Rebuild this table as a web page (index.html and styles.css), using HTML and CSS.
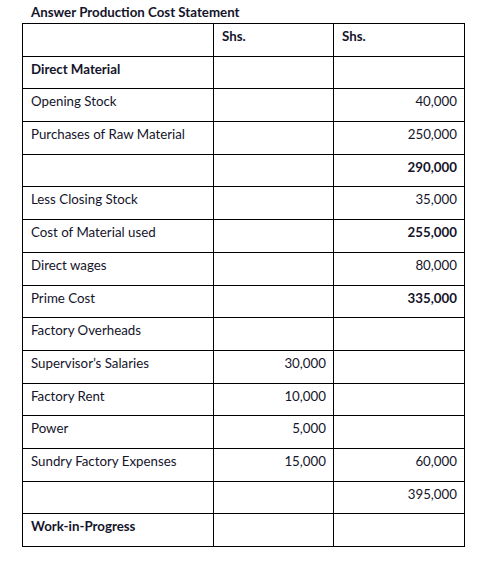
FILE: index.html
```html
<!DOCTYPE html>
<html>
<head>
<meta charset="utf-8">
<link rel="stylesheet" href="styles.css">
</head>
<body>
<div class="page">
  <div class="title">Answer Production Cost Statement</div>
  <table class="sheet">
    <colgroup><col class="c1"><col class="c2"><col class="c3"></colgroup>
    <tr><td></td><td class="hd">Shs.</td><td class="hd">Shs.</td></tr>
    <tr><td class="b">Direct Material</td><td></td><td></td></tr>
    <tr><td>Opening Stock</td><td></td><td class="n">40,000</td></tr>
    <tr><td>Purchases of Raw Material</td><td></td><td class="n">250,000</td></tr>
    <tr><td></td><td></td><td class="n b">290,000</td></tr>
    <tr><td>Less Closing Stock</td><td></td><td class="n">35,000</td></tr>
    <tr><td>Cost of Material used</td><td></td><td class="n b">255,000</td></tr>
    <tr><td>Direct wages</td><td></td><td class="n">80,000</td></tr>
    <tr><td>Prime Cost</td><td></td><td class="n b">335,000</td></tr>
    <tr><td>Factory Overheads</td><td></td><td></td></tr>
    <tr><td>Supervisor’s Salaries</td><td class="n">30,000</td><td></td></tr>
    <tr><td>Factory Rent</td><td class="n">10,000</td><td></td></tr>
    <tr><td>Power</td><td class="n">5,000</td><td></td></tr>
    <tr><td>Sundry Factory Expenses</td><td class="n">15,000</td><td class="n">60,000</td></tr>
    <tr><td></td><td></td><td class="n">395,000</td></tr>
    <tr><td class="b">Work-in-Progress</td><td></td><td></td></tr>
  </table>
</div>
</body>
</html>
```

FILE: styles.css
```css
html, body {
  margin: 0;
  padding: 0;
  background: #ffffff;
}
.page {
  padding: 4px 0 0 22px;
  font-family: Lato, "Open Sans", sans-serif;
  font-size: 13.3px;
  color: #14142a;
}
.title {
  font-weight: bold;
  padding-left: 9px;
  line-height: 16px;
  height: 19px;
}
.sheet {
  border-collapse: collapse;
  table-layout: fixed;
  width: 443px;
}
.c1 { width: 191px; }
.c2 { width: 120px; }
.c3 { width: 131px; }
.sheet td {
  border: 1px solid #000;
  height: 32.7px;
  box-sizing: border-box;
  padding: 4px 6px 0 8px;
  vertical-align: top;
  line-height: 16px;
  white-space: nowrap;
}
.sheet td.hd {
  font-weight: bold;
  padding-top: 4px;
}
.sheet td.n {
  text-align: right;
  padding-right: 7px;
}
.b { font-weight: bold; }
```
